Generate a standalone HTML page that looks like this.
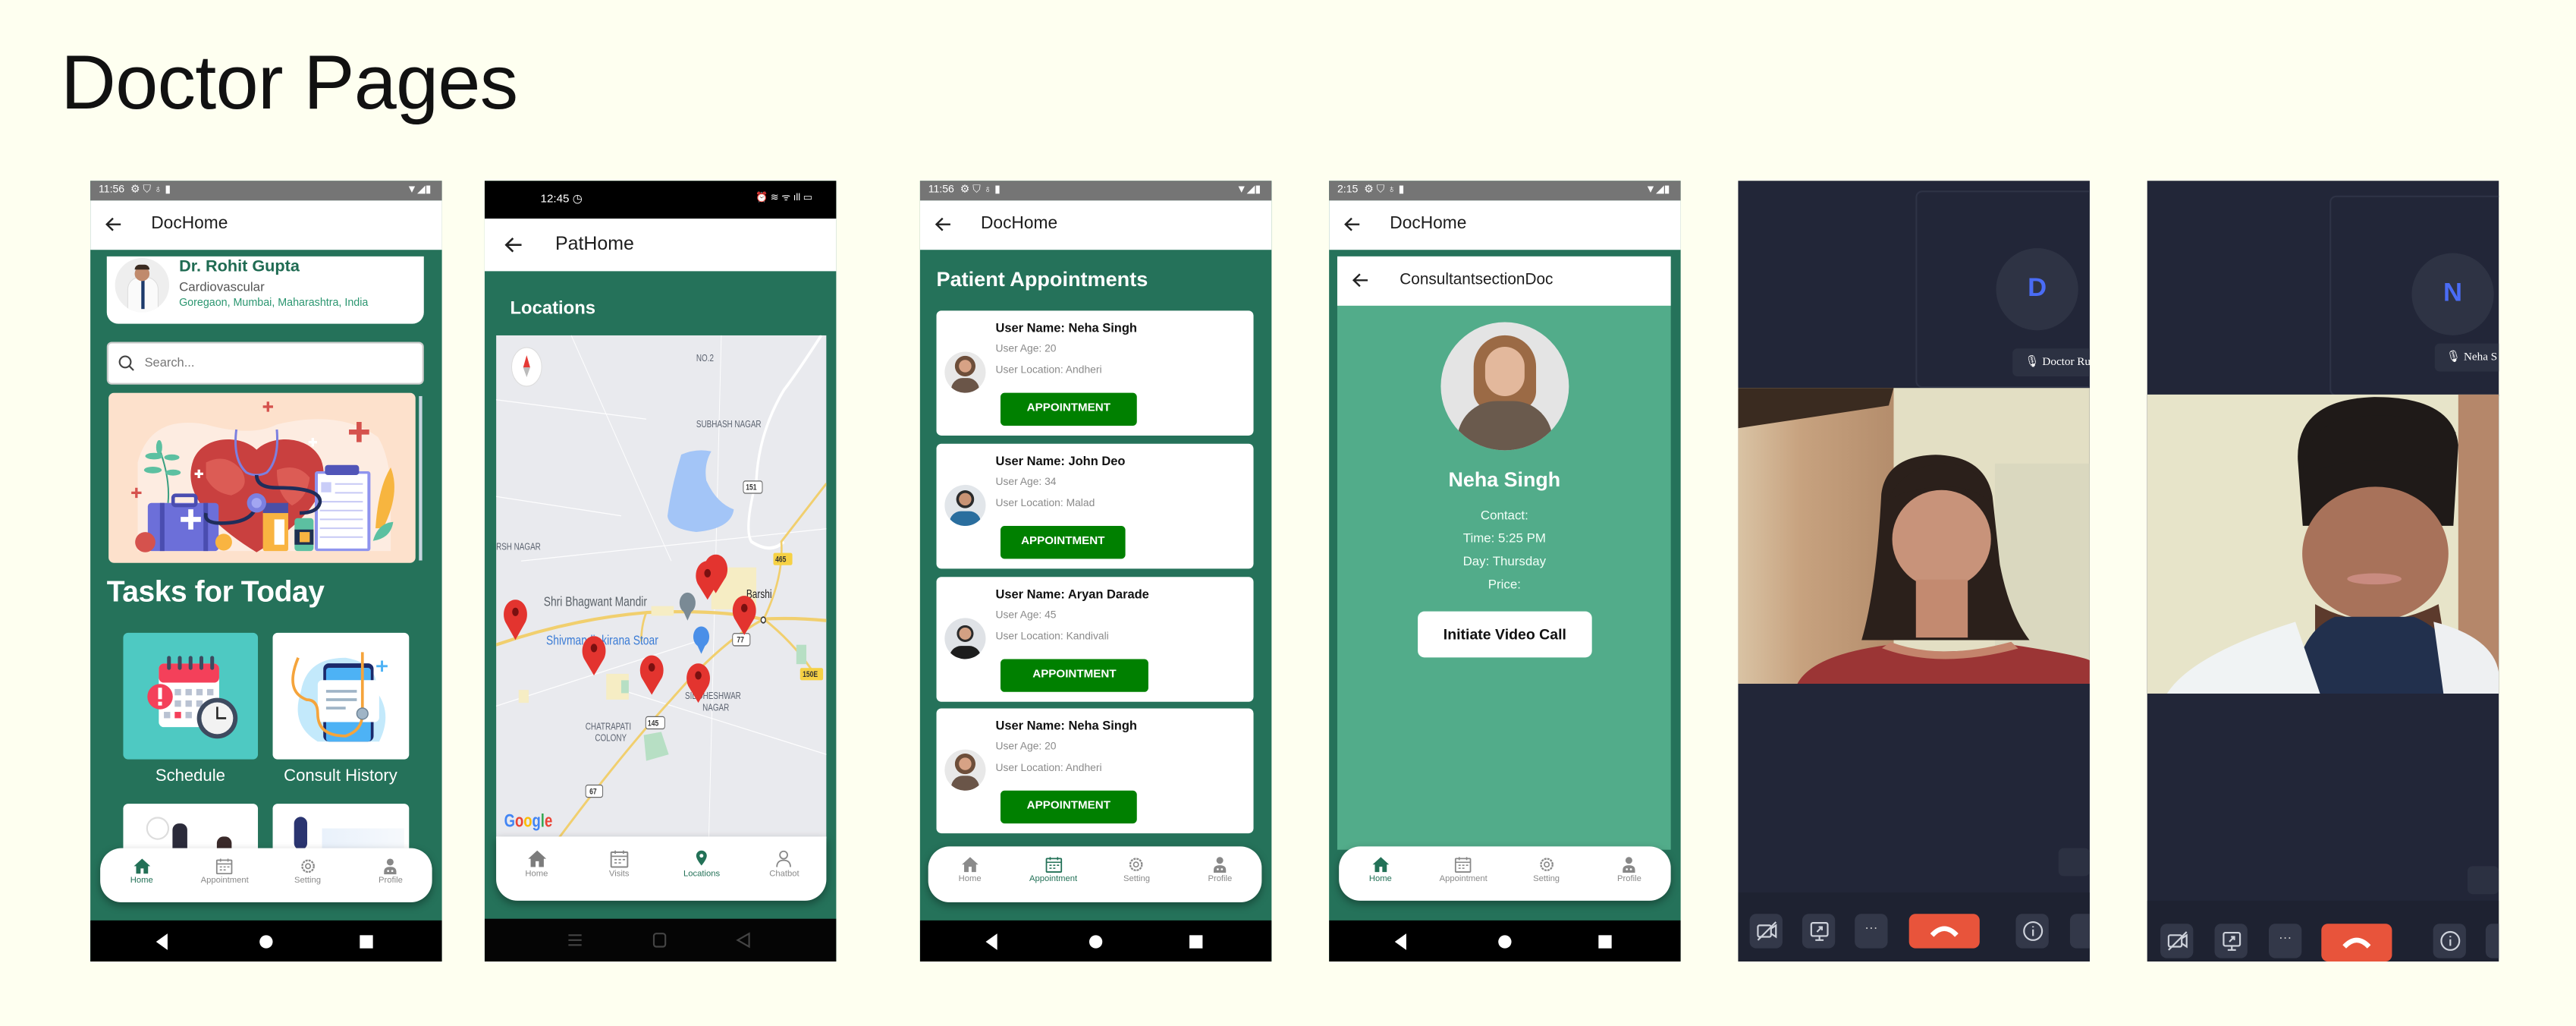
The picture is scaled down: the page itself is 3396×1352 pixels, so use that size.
<!DOCTYPE html>
<html><head><meta charset="utf-8">
<style>
*{margin:0;padding:0;box-sizing:border-box}
html,body{width:3396px;height:1352px;overflow:hidden;background:#fefff0}
#w{position:absolute;left:0;top:0;width:1568px;height:624.3px;transform:scale(2.16582);transform-origin:0 0;font-family:"Liberation Sans",Arial,sans-serif}
.a{position:absolute}
.ph{position:absolute;top:110px;width:213.5px;height:475px;background:#25725a;overflow:hidden}
.sb{position:absolute;left:0;top:0;width:100%;height:12px;background:#757575;color:#fff;font-size:6.5px;line-height:12px;padding-left:5px}
.ab{position:absolute;left:0;top:12px;width:100%;height:29.5px;background:#fff;font-size:10.5px;color:#1d1d1d;line-height:29.5px}
.ab .t{position:absolute;left:37px}
.ab svg{position:absolute;left:9px;top:10px}
.bb{position:absolute;left:0;bottom:0;width:100%;height:25px;background:#000}
.nav{position:absolute;background:#fff;border-radius:13px;box-shadow:0 2px 5px rgba(0,0,0,.35)}
.ni{position:absolute;top:0;width:25%;height:100%;text-align:center;font-size:5.2px;color:#8a8a8a}
.ni svg{display:block;margin:6px auto 1px}
.ni.on{color:#237157}
.card{position:absolute;left:10px;width:193px;height:75.5px;background:#fff;border-radius:3px}
.card .n{position:absolute;left:36px;top:6px;font-size:7.6px;font-weight:bold;color:#111}
.card .l{position:absolute;left:36px;font-size:6.4px;color:#8a8a8a}
.card .btn{position:absolute;left:39px;top:50px;height:20px;background:#008000;border-radius:2.5px;color:#fff;font-weight:bold;font-size:7px;text-align:center;line-height:20px}
.card .av{position:absolute;left:5px;top:25px;width:25px;height:25px;border-radius:50%;overflow:hidden;background:#d9d9d9}
.ctl{position:absolute;width:20px;height:21px;border-radius:4px;background:#333849}
</style></head><body><div id="w">

<div class="a" style="left:37px;top:23px;font-size:46.5px;color:#111;letter-spacing:-0.3px;-webkit-text-stroke:0">Doctor Pages</div>

<!-- ============ PHONE 1 ============ -->
<div class="ph" style="left:55px">
 <div class="sb">11:56 &nbsp;⚙ ⛉ ♁ ▮<span style="position:absolute;right:6px">▼◢▮</span></div>
 <div class="ab"><svg width="10" height="9" viewBox="0 0 10 9"><path d="M9.5 4.5H1.2M4.8 0.8L1 4.5l3.8 3.7" stroke="#222" stroke-width="1.1" fill="none"/></svg><span class="t">DocHome</span></div>
 <div class="a" style="left:10px;top:46px;width:193px;height:41px;background:#fff;border-radius:0 0 7px 7px"></div>
 <div class="a" style="left:15px;top:47px;width:33px;height:33px;border-radius:50%;background:radial-gradient(circle at 50% 30%,#c79a7d 0 15%,#eee 16%);overflow:hidden">
  <div class="a" style="left:8px;top:12px;width:18px;height:22px;background:#fafafa;border-radius:7px 7px 0 0;box-shadow:0 0 0 .5px #ddd"></div>
  <div class="a" style="left:16px;top:13px;width:2px;height:18px;background:#1d3a6b"></div>
  <div class="a" style="left:12px;top:5px;width:9px;height:9px;border-radius:50%;background:#c08a6c"></div>
  <div class="a" style="left:12px;top:4px;width:9px;height:3px;border-radius:4px 4px 0 0;background:#3a2a20"></div>
 </div>
 <div class="a" style="left:54px;top:47px;font-size:10px;font-weight:bold;color:#1f6b52">Dr. Rohit Gupta</div>
 <div class="a" style="left:54px;top:60px;font-size:7.8px;color:#555">Cardiovascular</div>
 <div class="a" style="left:54px;top:70.5px;font-size:6.6px;color:#2b9670">Goregaon, Mumbai, Maharashtra, India</div>
 <div class="a" style="left:10px;top:98px;width:193px;height:26px;background:#fff;border-radius:3px;border:.5px solid #ccc"></div>
 <svg class="a" style="left:17px;top:106px" width="10" height="10" viewBox="0 0 10 10"><circle cx="4.2" cy="4.2" r="3.4" stroke="#444" stroke-width="1" fill="none"/><path d="M6.7 6.7L9.3 9.3" stroke="#444" stroke-width="1"/></svg>
 <div class="a" style="left:33px;top:106px;font-size:7.6px;color:#777">Search...</div>
 <svg class="a" style="left:10.5px;top:129px" width="187" height="103.5" viewBox="35 25 1213 672">
  <rect x="35" y="25" width="1213" height="672" rx="22" fill="#fde1cc"/>
  <path d="M150 300 Q200 110 420 150 Q600 200 700 150 Q950 90 1100 200 Q1160 300 1150 500 L1150 650 L150 650Z" fill="#fdece1"/>
  <path d="M620 655 C400 520 330 400 370 290 C410 190 560 190 620 250 C680 190 830 190 875 290 C915 400 840 520 620 655Z" fill="#c9403f"/>
  <path d="M420 300 Q500 260 560 330 Q600 400 520 430 Q450 420 420 360Z" fill="#dc5c55"/>
  <path d="M700 330 Q780 300 830 360 Q820 440 760 470 Q700 430 700 330Z" fill="#dc5c55"/>
  <rect x="190" y="460" width="280" height="190" rx="14" fill="#6c6fd9"/><rect x="290" y="430" width="90" height="40" rx="10" fill="none" stroke="#4a4db0" stroke-width="14"/>
  <rect x="238" y="460" width="18" height="190" fill="#4a4db0"/><rect x="410" y="460" width="18" height="190" fill="#4a4db0"/>
  <path d="M320 515h30v-30h20v30h30v20h-30v30h-20v-30h-30z" fill="#fff"/>
  <rect x="645" y="465" width="100" height="185" rx="8" fill="#f9b441"/><rect x="645" y="460" width="100" height="40" fill="#4b4fa6"/><rect x="690" y="525" width="40" height="100" fill="#fff"/>
  <rect x="770" y="520" width="75" height="130" rx="12" fill="#5cc0a1"/><rect x="770" y="565" width="75" height="60" fill="#1f3050"/><rect x="790" y="575" width="40" height="40" fill="#f9b441"/>
  <rect x="850" y="335" width="220" height="315" rx="10" fill="#8f94ee"/><rect x="862" y="345" width="196" height="295" fill="#fff"/>
  <rect x="890" y="310" width="135" height="40" rx="12" fill="#5155b8"/>
  <g stroke="#c7c9f5" stroke-width="6"><path d="M930 385h110M930 420h110M870 455h170M870 490h170M870 525h170M870 560h170M870 595h170"/></g>
  <rect x="875" y="378" width="40" height="40" fill="#c9cdf8"/>
  <path d="M540 170 Q525 290 580 340 Q620 360 660 340 Q710 290 700 170" stroke="#7c80e0" stroke-width="9" fill="none"/>
  <path d="M620 350 Q620 400 700 400 Q880 400 870 460 Q860 500 790 500" stroke="#1f2d5a" stroke-width="14" fill="none"/>
  <path d="M620 450 Q620 540 480 540 Q410 540 420 500" stroke="#1f2d5a" stroke-width="14" fill="none"/>
  <circle cx="620" cy="460" r="38" fill="#7c80e0"/><circle cx="620" cy="460" r="20" fill="#a2a6f2"/>
  <path d="M230 230 Q280 360 270 460" stroke="#3a9f80" stroke-width="6" fill="none"/>
  <g fill="#5cc0a1"><ellipse cx="215" cy="275" rx="35" ry="13"/><ellipse cx="285" cy="280" rx="30" ry="12"/><ellipse cx="210" cy="330" rx="35" ry="13"/><ellipse cx="290" cy="340" rx="30" ry="12"/><ellipse cx="235" cy="240" rx="12" ry="28"/></g>
  <path d="M1090 560 Q1100 400 1150 320 Q1190 420 1120 560Z" fill="#f7b53f"/><path d="M1080 610 Q1100 540 1160 535 Q1150 600 1080 610Z" fill="#5cc0a1"/>
  <circle cx="180" cy="615" r="40" fill="#d5524d"/><circle cx="490" cy="615" r="33" fill="#f9b441"/>
  <path d="M985 170h30v-30h20v30h30v20h-30v30h-20v-30h-30z" fill="#d5524d"/><path d="M645 75h15v-15h10v15h15v10h-15v15h-10v-15h-15z" fill="#d5524d"/>
  <path d="M125 415h15v-15h10v15h15v10h-15v15h-10v-15h-15z" fill="#d5524d"/>
  <path d="M375 340h12v-12h10v12h12v10h-12v12h-10v-12h-12z" fill="#fff"/><path d="M825 215h12v-12h10v12h12v10h-12v12h-10v-12h-12z" fill="#fff"/>
 </svg>
 <div class="a" style="left:200px;top:131px;width:2px;height:100px;background:#c8d6e0"></div>
 <div class="a" style="left:10px;top:240px;font-size:18px;font-weight:bold;color:#fff;letter-spacing:-0.2px">Tasks for Today</div>
 <div class="a" style="left:19.5px;top:274.7px;width:82.7px;height:77.8px;background:#4ec9c2;border-radius:3px"></div>
 <svg class="a" style="left:26px;top:286px" width="70" height="58" viewBox="0 0 180 150">
  <rect x="40" y="20" width="95" height="100" rx="8" fill="#fff"/><rect x="40" y="20" width="95" height="30" rx="8" fill="#f4405a"/>
  <g fill="#3e4a5f"><rect x="53" y="8" width="6" height="22" rx="3"/><rect x="70" y="8" width="6" height="22" rx="3"/><rect x="87" y="8" width="6" height="22" rx="3"/><rect x="104" y="8" width="6" height="22" rx="3"/><rect x="121" y="8" width="6" height="22" rx="3"/></g>
  <g fill="#b9c2d2"><rect x="65" y="60" width="10" height="10"/><rect x="82" y="60" width="10" height="10"/><rect x="99" y="60" width="10" height="10"/><rect x="116" y="60" width="10" height="10"/><rect x="65" y="78" width="10" height="10"/><rect x="82" y="78" width="10" height="10"/><rect x="99" y="78" width="10" height="10"/><rect x="48" y="96" width="10" height="10"/><rect x="82" y="96" width="10" height="10"/></g>
  <rect x="65" y="96" width="10" height="10" fill="#f4405a"/>
  <circle cx="42" cy="72" r="20" fill="#f4405a"/><rect x="39" y="58" width="6" height="18" fill="#fff"/><rect x="39" y="80" width="6" height="6" fill="#fff"/>
  <circle cx="132" cy="106" r="32" fill="#3e4a5f"/><circle cx="132" cy="106" r="25" fill="#f2f2f2"/><path d="M132 88v18h14" stroke="#222" stroke-width="3" fill="none"/>
 </svg>
 <div class="a" style="left:110.8px;top:274.7px;width:83px;height:77.8px;background:#fff;border-radius:3px"></div>
 <svg class="a" style="left:118px;top:283px" width="68" height="62" viewBox="0 0 200 180">
  <path d="M30 80 Q40 20 110 20 Q170 30 165 80 Q195 120 170 170 L60 170 Q10 140 30 80Z" fill="#c3e9fb"/>
  <rect x="70" y="30" width="90" height="140" rx="10" fill="#1b2a6b"/><rect x="75" y="38" width="80" height="132" rx="5" fill="#4db2f5"/>
  <rect x="60" y="60" width="110" height="75" rx="8" fill="#fff"/><g stroke="#9fb4c6" stroke-width="5"><path d="M75 80h55M75 95h55M75 110h35"/></g>
  <path d="M25 20 Q0 80 40 95 Q60 95 60 120 Q60 160 110 160 Q140 150 140 120 L140 10" stroke="#f5a43b" stroke-width="5" fill="none"/>
  <circle cx="140" cy="120" r="10" fill="#9fb4c6" stroke="#6e8497" stroke-width="2"/>
  <path d="M175 25v20M165 35h20" stroke="#4db2f5" stroke-width="4"/>
 </svg>
 <div class="a" style="left:19.5px;top:357px;width:82.7px;text-align:center;font-size:10.2px;color:#fff">Schedule</div>
 <div class="a" style="left:110.8px;top:357px;width:83px;text-align:center;font-size:10.2px;color:#fff">Consult History</div>
 <div class="a" style="left:19.5px;top:379px;width:82.7px;height:40px;background:#fff;border-radius:3px;overflow:hidden"><div class="a" style="left:14px;top:8px;width:14px;height:14px;border-radius:50%;border:1px solid #ddd"></div><div class="a" style="left:30px;top:12px;width:9px;height:20px;border-radius:4px;background:#2b2b3a"></div><div class="a" style="left:57px;top:20px;width:9px;height:12px;border-radius:4px;background:#3a2a2a"></div></div>
 <div class="a" style="left:110.8px;top:379px;width:83px;height:40px;background:#fff;border-radius:3px;overflow:hidden"><div class="a" style="left:13px;top:8px;width:8px;height:20px;border-radius:4px;background:#2a3470"></div><div class="a" style="left:30px;top:15px;width:50px;height:20px;background:linear-gradient(90deg,#e9f1fb,#f6f9fc)"></div></div>
 <div class="nav" style="left:6px;top:406px;width:202px;height:33px">
  <div class="ni on" style="left:0"><svg width="11" height="10" viewBox="0 0 24 22"><path d="M12 1L1 11h3v10h6v-7h4v7h6V11h3z" fill="#237157"/></svg>Home</div>
  <div class="ni" style="left:25%"><svg width="11" height="10" viewBox="0 0 24 22"><rect x="2" y="3" width="20" height="18" rx="1" fill="none" stroke="#888" stroke-width="1.8"/><path d="M2 8h20M7 1v4M17 1v4M6 12h3M11 12h3M16 12h3M6 16h3M11 16h3" stroke="#888" stroke-width="1.6"/></svg>Appointment</div>
  <div class="ni" style="left:50%"><svg width="11" height="10" viewBox="0 0 24 24"><circle cx="12" cy="12" r="8.5" fill="none" stroke="#888" stroke-width="2.5" stroke-dasharray="3.3 1.2"/><circle cx="12" cy="12" r="3.5" fill="none" stroke="#888" stroke-width="1.8"/></svg>Setting</div>
  <div class="ni" style="left:75%"><svg width="11" height="10" viewBox="0 0 24 24"><circle cx="12" cy="6" r="5" fill="#888"/><path d="M3 24v-4q0-7 9-7t9 7v4z" fill="#888"/><circle cx="9" cy="19" r="1.5" fill="#fff"/><circle cx="15" cy="19" r="1.5" fill="#fff"/></svg>Profile</div>
 </div>
 <div class="bb"><svg class="a" style="left:40px;top:8px" width="134" height="10" viewBox="0 0 134 10"><path d="M0 5L7 0V10Z" fill="#fff"/><circle cx="67" cy="5" r="4" fill="#fff"/><rect x="124" y="1" width="8" height="8" fill="#fff"/></svg></div>
</div>

<!-- ============ PHONE 2 ============ -->
<div class="ph" style="left:295px">
 <div class="a" style="left:0;top:0;width:100%;height:23px;background:#000;color:#fff;font-size:7px;line-height:23px"><span style="position:absolute;left:34px">12:45 ◷</span><span style="position:absolute;right:14px;font-size:6px">⏰ ≋ ᯤ ıll ▭</span></div>
 <div class="ab" style="top:23px;height:32px;line-height:32px;font-size:11.5px"><svg style="left:12px;top:11px" width="11" height="10" viewBox="0 0 10 9"><path d="M9.5 4.5H1.2M4.8 0.8L1 4.5l3.8 3.7" stroke="#222" stroke-width="1.1" fill="none"/></svg><span class="t" style="left:43px">PatHome</span></div>
 <div class="a" style="left:15.5px;top:72px;font-size:11px;font-weight:bold;color:#fff">Locations</div>
 <svg class="a" style="left:6.5px;top:94px;" width="201" height="306" viewBox="0 0 1320 1560" preserveAspectRatio="none">
  <rect width="1320" height="1560" fill="#e9eaee"/>
  <g stroke="#fff" stroke-width="3" fill="none" opacity=".9"><path d="M0 200 L600 260 M300 0 L700 700 M0 1150 L800 950 M100 700 L1320 600 M900 0 L850 1560 M500 1100 L1320 1300 M0 500 L500 560"/></g>
  <path d="M1300 0 Q1200 120 1150 170 Q1050 300 1040 450 Q990 600 1020 640 Q1100 680 1150 640" stroke="#fff" stroke-width="10" fill="none"/>
  <path d="M740 370 Q800 350 860 360 Q830 400 840 450 Q880 520 950 540 Q940 600 800 610 Q690 600 685 560 Q700 470 740 370Z" fill="#a3c5f7"/>
  <path d="M0 960 Q300 880 600 860 Q900 850 1060 880 Q1200 875 1320 885" stroke="#f1cf6e" stroke-width="10" fill="none"/>
  <path d="M250 1560 Q500 1300 700 1130 Q900 950 1070 880 Q1150 750 1140 640 L1320 460" stroke="#f1cf6e" stroke-width="8" fill="none"/>
  <path d="M1070 880 Q1200 960 1280 1060" stroke="#f1cf6e" stroke-width="8" fill="none"/>
  <path d="M600 860 Q580 900 580 950" stroke="#f1cf6e" stroke-width="8" fill="none"/>
  <g fill="#f6edc4"><rect x="860" y="720" width="180" height="130"/><rect x="440" y="1050" width="90" height="80"/><rect x="90" y="1100" width="40" height="40"/><rect x="620" y="840" width="90" height="30"/></g>
  <g fill="#b7dfc4"><path d="M590 1240 L660 1230 L690 1300 L600 1320Z"/><rect x="500" y="1070" width="30" height="40"/><rect x="1200" y="960" width="40" height="60"/></g>
  <g fill="#5c6370" font-size="30" font-family="Liberation Sans"><text x="800" y="80">NO.2</text><text x="800" y="285">SUBHASH NAGAR</text><text x="0" y="665">RSH NAGAR</text><text x="1000" y="815" fill="#222" font-size="36">Barshi</text><text x="755" y="1128">SIDDHESHWAR</text><text x="825" y="1165">NAGAR</text><text x="357" y="1223">CHATRAPATI</text><text x="395" y="1258">COLONY</text></g>
  <text x="190" y="840" font-size="42" fill="#5a6168" font-family="Liberation Sans">Shri Bhagwant Mandir</text>
  <text x="200" y="960" font-size="42" fill="#3a7bd5" font-family="Liberation Sans">Shivmandir kirana Stoar</text>
  <circle cx="765" cy="830" r="32" fill="#7a8a95"/><path d="M745 850 L765 885 L785 850Z" fill="#7a8a95"/>
  <circle cx="820" cy="935" r="32" fill="#4a8fe8"/><path d="M800 955 L820 988 L840 955Z" fill="#4a8fe8"/>
  <g font-size="26" font-family="Liberation Sans" font-weight="bold"><rect x="1108" y="675" width="76" height="38" rx="6" fill="#f6d144"/><text x="1116" y="703" fill="#333">465</text><rect x="1215" y="1032" width="92" height="38" rx="6" fill="#f6d144"/><text x="1225" y="1060" fill="#333">150E</text>
  <rect x="988" y="452" width="76" height="38" rx="8" fill="#fff" stroke="#666" stroke-width="3"/><text x="998" y="480" fill="#333">151</text>
  <rect x="945" y="925" width="70" height="38" rx="8" fill="#fff" stroke="#666" stroke-width="3"/><text x="962" y="953" fill="#333">77</text>
  <rect x="598" y="1183" width="76" height="38" rx="8" fill="#fff" stroke="#666" stroke-width="3"/><text x="606" y="1211" fill="#333">145</text>
  <rect x="358" y="1395" width="68" height="38" rx="8" fill="#fff" stroke="#666" stroke-width="3"/><text x="373" y="1423" fill="#333">67</text></g>
  <g fill="#e3342f">
   <path d="M878 680 a46 46 0 0 1 40 70 L878 800 L838 750 a46 46 0 0 1 40 -70Z"/>
   <path d="M845 700 a46 46 0 0 1 40 70 L845 820 L805 770 a46 46 0 0 1 40 -70Z"/>
   <path d="M77 820 a46 46 0 0 1 40 70 L77 945 L37 890 a46 46 0 0 1 40 -70Z"/>
   <path d="M992 808 a46 46 0 0 1 40 70 L992 930 L952 878 a46 46 0 0 1 40 -70Z"/>
   <path d="M391 933 a46 46 0 0 1 40 70 L391 1055 L351 1003 a46 46 0 0 1 40 -70Z"/>
   <path d="M622 993 a46 46 0 0 1 40 70 L622 1115 L582 1063 a46 46 0 0 1 40 -70Z"/>
   <path d="M808 1018 a46 46 0 0 1 40 70 L808 1140 L768 1088 a46 46 0 0 1 40 -70Z"/>
  </g>
  <g fill="#7a1010"><circle cx="845" cy="738" r="13"/><circle cx="77" cy="858" r="13"/><circle cx="992" cy="846" r="13"/><circle cx="391" cy="970" r="13"/><circle cx="622" cy="1030" r="13"/><circle cx="808" cy="1055" r="13"/></g>
  <circle cx="1068" cy="883" r="9" fill="#fff" stroke="#333" stroke-width="4"/>
  <circle cx="122" cy="98" r="60" fill="#fff" stroke="#ddd" stroke-width="3"/><path d="M122 62 L108 100 L136 100Z" fill="#e53935"/><path d="M108 100 L122 130 L136 100Z" fill="#bbb"/>
  <text x="32" y="1525" font-size="56" font-family="Liberation Sans" font-weight="bold"><tspan fill="#4285f4">G</tspan><tspan fill="#ea4335">o</tspan><tspan fill="#fbbc05">o</tspan><tspan fill="#4285f4">g</tspan><tspan fill="#34a853">l</tspan><tspan fill="#ea4335">e</tspan></text>
 </svg>
 <div class="nav" style="left:6.5px;top:399px;width:201px;height:39px;border-radius:0 0 13px 13px">
  <div class="ni" style="left:0"><svg style="margin-top:8px" width="12" height="11" viewBox="0 0 24 22"><path d="M12 1L1 11h3v10h6v-7h4v7h6V11h3z" fill="#7c7c7c"/></svg>Home</div>
  <div class="ni" style="left:25%"><svg style="margin-top:8px" width="12" height="11" viewBox="0 0 24 22"><rect x="2" y="3" width="20" height="18" rx="1" fill="none" stroke="#888" stroke-width="1.8"/><path d="M2 8h20M7 1v4M17 1v4M6 12h3M11 12h3M16 12h3M6 16h3M11 16h3" stroke="#888" stroke-width="1.6"/></svg>Visits</div>
  <div class="ni on" style="left:50%"><svg style="margin-top:8px" width="12" height="11" viewBox="0 0 24 24"><path d="M12 1a7 7 0 0 1 7 7c0 5-7 13-7 13S5 13 5 8a7 7 0 0 1 7-7z" fill="#237157"/><circle cx="12" cy="8" r="2.5" fill="#fff"/></svg>Locations</div>
  <div class="ni" style="left:75%"><svg style="margin-top:8px" width="12" height="11" viewBox="0 0 24 24"><circle cx="12" cy="7" r="5" fill="none" stroke="#888" stroke-width="1.8"/><path d="M3 23q0-9 9-9t9 9" fill="none" stroke="#888" stroke-width="1.8"/></svg>Chatbot</div>
 </div>
 <div class="bb" style="background:#050505;height:26px"><svg class="a" style="left:50px;top:8px" width="114" height="10" viewBox="0 0 114 10"><path d="M1 2h8M1 5h8M1 8h8" stroke="#444" stroke-width="1"/><rect x="53" y="1" width="7" height="8" rx="1.5" fill="none" stroke="#444"/><path d="M111 1L104 5L111 9Z" fill="none" stroke="#444"/></svg></div>
</div>

<!-- ============ PHONE 3 ============ -->
<div class="ph" style="left:560px">
 <div class="sb">11:56 &nbsp;⚙ ⛉ ♁ ▮<span style="position:absolute;right:6px">▼◢▮</span></div>
 <div class="ab"><svg width="10" height="9" viewBox="0 0 10 9"><path d="M9.5 4.5H1.2M4.8 0.8L1 4.5l3.8 3.7" stroke="#222" stroke-width="1.1" fill="none"/></svg><span class="t">DocHome</span></div>
 <div class="a" style="left:10px;top:53px;font-size:12.5px;font-weight:bold;color:#fff">Patient Appointments</div>
 <div class="card" style="top:79px"><div class="av" style="background:radial-gradient(circle at 50% 35%,#d7a285 0 18%,#6d4e3a 19% 30%,#e8e8e8 31%)"><div class="a" style="left:4px;top:16px;width:17px;height:12px;border-radius:7px 7px 0 0;background:#6a5548"></div></div><div class="n">User Name: Neha Singh</div><div class="l" style="top:20px">User Age: 20</div><div class="l" style="top:33px">User Location: Andheri</div><div class="btn" style="width:83px">APPOINTMENT</div></div>
 <div class="card" style="top:160px"><div class="av" style="background:radial-gradient(circle at 50% 35%,#c99374 0 18%,#2b2b2b 19% 26%,#e2e6ea 27%)"><div class="a" style="left:3px;top:16px;width:19px;height:12px;border-radius:7px 7px 0 0;background:#2a6e9e"></div></div><div class="n">User Name: John Deo</div><div class="l" style="top:20px">User Age: 34</div><div class="l" style="top:33px">User Location: Malad</div><div class="btn" style="width:76px">APPOINTMENT</div></div>
 <div class="card" style="top:241px"><div class="av" style="background:radial-gradient(circle at 50% 38%,#d3a083 0 18%,#2b2b2b 19% 25%,#dfe2e6 26%)"><div class="a" style="left:3px;top:17px;width:19px;height:12px;border-radius:7px 7px 0 0;background:#1d1d1d"></div></div><div class="n">User Name: Aryan Darade</div><div class="l" style="top:20px">User Age: 45</div><div class="l" style="top:33px">User Location: Kandivali</div><div class="btn" style="width:90px">APPOINTMENT</div></div>
 <div class="card" style="top:321px"><div class="av" style="background:radial-gradient(circle at 50% 35%,#d7a285 0 18%,#6d4e3a 19% 30%,#e8e8e8 31%)"><div class="a" style="left:4px;top:16px;width:17px;height:12px;border-radius:7px 7px 0 0;background:#6a5548"></div></div><div class="n">User Name: Neha Singh</div><div class="l" style="top:20px">User Age: 20</div><div class="l" style="top:33px">User Location: Andheri</div><div class="btn" style="width:83px">APPOINTMENT</div></div>
 <div class="nav" style="left:5px;top:405px;width:203px;height:34px">
  <div class="ni" style="left:0"><svg width="11" height="10" viewBox="0 0 24 22"><path d="M12 1L1 11h3v10h6v-7h4v7h6V11h3z" fill="#8a8a8a"/></svg>Home</div>
  <div class="ni on" style="left:25%"><svg width="11" height="10" viewBox="0 0 24 22"><rect x="2" y="3" width="20" height="18" rx="1" fill="none" stroke="#237157" stroke-width="1.8"/><path d="M2 8h20M7 1v4M17 1v4M6 12h3M11 12h3M16 12h3M6 16h3M11 16h3" stroke="#237157" stroke-width="1.6"/></svg>Appointment</div>
  <div class="ni" style="left:50%"><svg width="11" height="10" viewBox="0 0 24 24"><circle cx="12" cy="12" r="8.5" fill="none" stroke="#888" stroke-width="2.5" stroke-dasharray="3.3 1.2"/><circle cx="12" cy="12" r="3.5" fill="none" stroke="#888" stroke-width="1.8"/></svg>Setting</div>
  <div class="ni" style="left:75%"><svg width="11" height="10" viewBox="0 0 24 24"><circle cx="12" cy="6" r="5" fill="#888"/><path d="M3 24v-4q0-7 9-7t9 7v4z" fill="#888"/><circle cx="9" cy="19" r="1.5" fill="#fff"/><circle cx="15" cy="19" r="1.5" fill="#fff"/></svg>Profile</div>
 </div>
 <div class="bb"><svg class="a" style="left:40px;top:8px" width="134" height="10" viewBox="0 0 134 10"><path d="M0 5L7 0V10Z" fill="#fff"/><circle cx="67" cy="5" r="4" fill="#fff"/><rect x="124" y="1" width="8" height="8" fill="#fff"/></svg></div>
</div>

<!-- ============ PHONE 4 ============ -->
<div class="ph" style="left:809px">
 <div class="sb">2:15 &nbsp;⚙ ⛉ ♁ ▮<span style="position:absolute;right:6px">▼◢▮</span></div>
 <div class="ab"><svg width="10" height="9" viewBox="0 0 10 9"><path d="M9.5 4.5H1.2M4.8 0.8L1 4.5l3.8 3.7" stroke="#222" stroke-width="1.1" fill="none"/></svg><span class="t">DocHome</span></div>
 <div class="a" style="left:5px;top:46px;width:203px;height:361px;background:#52ac8a"></div>
 <div class="a" style="left:5px;top:46px;width:203px;height:29.5px;background:#fff;font-size:9.6px;line-height:29.5px;color:#1d1d1d"><svg class="a" style="left:9px;top:10px" width="10" height="9" viewBox="0 0 10 9"><path d="M9.5 4.5H1.2M4.8 0.8L1 4.5l3.8 3.7" stroke="#222" stroke-width="1.1" fill="none"/></svg><span class="a" style="left:38px">ConsultantsectionDoc</span></div>
 <div class="a" style="left:68px;top:85.5px;width:78px;height:78px;border-radius:50%;background:#e4e4e4;overflow:hidden">
  <div class="a" style="left:20px;top:8px;width:38px;height:46px;border-radius:19px 19px 12px 12px;background:#9b6a45"></div>
  <div class="a" style="left:27px;top:15px;width:24px;height:30px;border-radius:12px;background:#e3b89c"></div>
  <div class="a" style="left:10px;top:48px;width:58px;height:40px;border-radius:24px 24px 0 0;background:#6a5a4d"></div>
 </div>
 <div class="a" style="left:0;top:175px;width:213.5px;text-align:center;font-size:12.4px;font-weight:bold;color:#fff">Neha Singh</div>
 <div class="a" style="left:0;top:197px;width:213.5px;text-align:center;font-size:7.8px;color:#f2fff7;line-height:14px">Contact:<br>Time: 5:25 PM<br>Day: Thursday<br>Price:</div>
 <div class="a" style="left:54px;top:262px;width:106px;height:28px;background:#fff;border-radius:4px;text-align:center;line-height:28px;font-size:9px;font-weight:bold;color:#111">Initiate Video Call</div>
 <div class="nav" style="left:6px;top:405px;width:202px;height:33px">
  <div class="ni on" style="left:0"><svg width="11" height="10" viewBox="0 0 24 22"><path d="M12 1L1 11h3v10h6v-7h4v7h6V11h3z" fill="#237157"/></svg>Home</div>
  <div class="ni" style="left:25%"><svg width="11" height="10" viewBox="0 0 24 22"><rect x="2" y="3" width="20" height="18" rx="1" fill="none" stroke="#888" stroke-width="1.8"/><path d="M2 8h20M7 1v4M17 1v4M6 12h3M11 12h3M16 12h3M6 16h3M11 16h3" stroke="#888" stroke-width="1.6"/></svg>Appointment</div>
  <div class="ni" style="left:50%"><svg width="11" height="10" viewBox="0 0 24 24"><circle cx="12" cy="12" r="8.5" fill="none" stroke="#888" stroke-width="2.5" stroke-dasharray="3.3 1.2"/><circle cx="12" cy="12" r="3.5" fill="none" stroke="#888" stroke-width="1.8"/></svg>Setting</div>
  <div class="ni" style="left:75%"><svg width="11" height="10" viewBox="0 0 24 24"><circle cx="12" cy="6" r="5" fill="#888"/><path d="M3 24v-4q0-7 9-7t9 7v4z" fill="#888"/><circle cx="9" cy="19" r="1.5" fill="#fff"/><circle cx="15" cy="19" r="1.5" fill="#fff"/></svg>Profile</div>
 </div>
 <div class="bb"><svg class="a" style="left:40px;top:8px" width="134" height="10" viewBox="0 0 134 10"><path d="M0 5L7 0V10Z" fill="#fff"/><circle cx="67" cy="5" r="4" fill="#fff"/><rect x="124" y="1" width="8" height="8" fill="#fff"/></svg></div>
</div>

<!-- ============ PHONE 5 (video) ============ -->
<div class="ph" style="left:1058px;width:214px;background:#222638">
 <div class="a" style="left:108px;top:6px;width:110px;height:120px;border:.6px solid #2e3346;border-radius:4px"></div>
 <div class="a" style="left:157px;top:41px;width:50px;height:50px;border-radius:50%;background:#2e3344;color:#4a6cf5;font-weight:bold;font-size:16px;text-align:center;line-height:50px">D</div>
 <div class="a" style="left:166.5px;top:102px;width:50px;height:17px;border-radius:3px;background:#2c3142;color:#fff;font-family:'Liberation Serif',serif;font-size:7px;line-height:17px;padding-left:8px;white-space:nowrap">🎙 Doctor Ru</div>
 <svg class="a" style="left:0;top:125.5px" width="214" height="180" viewBox="0 0 712 1173" preserveAspectRatio="none">
  <defs><linearGradient id="wl" x1="0" x2="1"><stop offset="0" stop-color="#d9c3a4"/><stop offset=".4" stop-color="#c7a27f"/><stop offset="1" stop-color="#b48d6c"/></linearGradient></defs>
  <rect width="712" height="1173" fill="#e3dfc4"/>
  <rect width="315" height="1173" fill="url(#wl)"/><path d="M0 0H315L305 70L0 160Z" fill="#3a2b20"/>
  <rect x="520" y="300" width="192" height="873" fill="#d4d3bd" opacity=".6"/>
  <path d="M290 420 Q300 270 400 265 Q500 270 515 430 L530 700 Q550 900 590 1000 L250 1000 Q280 800 290 420Z" fill="#2b201b"/>
  <ellipse cx="412" cy="600" rx="100" ry="195" fill="#c8937a"/>
  <path d="M300 450 Q340 300 420 300 Q495 305 510 450 Q450 350 330 420Z" fill="#2b201b"/>
  <rect x="360" y="760" width="105" height="230" fill="#c38a70"/>
  <path d="M120 1173 Q150 1060 300 1020 Q400 1070 560 1020 Q690 1060 712 1080 V1173Z" fill="#9b3535"/>
  <path d="M300 1020 Q410 1100 560 1020" stroke="#c4846c" stroke-width="30" fill="none"/>
 </svg>
 <div class="a" style="left:0;top:433px;width:214px;height:42px;background:#1e2231"></div>
 <div class="a" style="left:195px;top:406px;width:19px;height:17px;border-radius:3px;background:#2c3142"></div>
 <div class="ctl" style="left:7px;top:446px"></div><div class="ctl" style="left:39px;top:446px"></div><div class="ctl" style="left:71px;top:446px;color:#ccc;font-size:8px;text-align:center;line-height:17px">···</div>
 <div class="a" style="left:104px;top:446px;width:43px;height:21px;border-radius:4px;background:#e8543b"></div>
 <svg class="a" style="left:117px;top:452px" width="17" height="9" viewBox="0 0 17 9"><path d="M1 7Q8.5-1 16 7" stroke="#fff" stroke-width="3" fill="none"/></svg>
 <div class="ctl" style="left:169px;top:446px"></div><div class="ctl" style="left:202px;top:446px"></div>
 <svg class="a" style="left:11px;top:450px" width="13" height="13" viewBox="0 0 13 13" stroke="#cfd3dc" fill="none" stroke-width="1"><rect x="1" y="3" width="8" height="7" rx="1"/><path d="M9 5l3-2v7l-3-2M1 12L12 1"/></svg>
 <svg class="a" style="left:43px;top:450px" width="13" height="13" viewBox="0 0 13 13" stroke="#cfd3dc" fill="none" stroke-width="1"><rect x="1.5" y="1.5" width="10" height="8" rx="1"/><path d="M6.5 9.5v2M4 12h5M5 7l3-3M6 4h2v2"/></svg>
 <svg class="a" style="left:173px;top:450px" width="13" height="13" viewBox="0 0 13 13" stroke="#cfd3dc" fill="none" stroke-width="1"><circle cx="6.5" cy="6.5" r="5.5"/><path d="M6.5 5.5v4M6.5 3.5v.8"/></svg>
</div>

<!-- ============ PHONE 6 (video) ============ -->
<div class="ph" style="left:1307px;width:214px;background:#222638">
 <div class="a" style="left:111px;top:9px;width:110px;height:122px;border:.6px solid #2e3346;border-radius:4px"></div>
 <div class="a" style="left:161px;top:44px;width:50px;height:50px;border-radius:50%;background:#2e3344;color:#4a6cf5;font-weight:bold;font-size:16px;text-align:center;line-height:50px">N</div>
 <div class="a" style="left:175px;top:99px;width:45px;height:17px;border-radius:3px;background:#2c3142;color:#fff;font-family:'Liberation Serif',serif;font-size:7px;line-height:17px;padding-left:7px;white-space:nowrap">🎙 Neha S</div>
 <svg class="a" style="left:0;top:130px" width="214" height="182" viewBox="0 0 712 1184" preserveAspectRatio="none">
  <rect width="712" height="1184" fill="#e7e4c9"/>
  <rect x="630" width="82" height="1184" fill="#b5876a"/>
  <path d="M305 260 Q300 20 460 10 Q620 10 630 200 L620 520 L315 520Z" fill="#1f1a18"/>
  <ellipse cx="462" cy="630" rx="148" ry="265" fill="#a8725a"/>
  <path d="M315 320 Q460 200 620 320 L625 150 Q520 60 420 90 Q320 110 315 320Z" fill="#1f1a18"/>
  <path d="M340 830 Q460 960 590 830 L600 950 L340 950Z" fill="#5c3a2c"/>
  <path d="M300 1184 Q300 950 380 880 L540 880 Q630 950 640 1184Z" fill="#22304d"/>
  <path d="M40 1184 Q90 1030 300 900 L350 1184Z" fill="#f0f3f4"/><path d="M580 900 Q700 960 712 1100 V1184H600Z" fill="#eef0f2"/>
  <ellipse cx="460" cy="730" rx="55" ry="22" fill="#c98b80"/>
 </svg>
 <div class="a" style="left:0;top:438px;width:214px;height:37px;background:#1e2231"></div>
 <div class="a" style="left:195px;top:417px;width:19px;height:17px;border-radius:3px;background:#2c3142"></div>
 <div class="ctl" style="left:8px;top:452px"></div><div class="ctl" style="left:41px;top:452px"></div><div class="ctl" style="left:74px;top:452px"></div>
 <div class="a" style="left:106px;top:452px;width:43px;height:23px;border-radius:4px;background:#e8543b"></div>
 <svg class="a" style="left:119px;top:459px" width="17" height="9" viewBox="0 0 17 9"><path d="M1 7Q8.5-1 16 7" stroke="#fff" stroke-width="3" fill="none"/></svg>
 <div class="ctl" style="left:174px;top:452px"></div><div class="ctl" style="left:206px;top:452px"></div>
 <svg class="a" style="left:12px;top:456px" width="13" height="13" viewBox="0 0 13 13" stroke="#cfd3dc" fill="none" stroke-width="1"><rect x="1" y="3" width="8" height="7" rx="1"/><path d="M9 5l3-2v7l-3-2M1 12L12 1"/></svg>
 <svg class="a" style="left:45px;top:456px" width="13" height="13" viewBox="0 0 13 13" stroke="#cfd3dc" fill="none" stroke-width="1"><rect x="1.5" y="1.5" width="10" height="8" rx="1"/><path d="M6.5 9.5v2M4 12h5M5 7l3-3M6 4h2v2"/></svg>
 <div class="a" style="left:74px;top:456px;width:20px;text-align:center;color:#ccc;font-size:8px">···</div>
 <svg class="a" style="left:178px;top:456px" width="13" height="13" viewBox="0 0 13 13" stroke="#cfd3dc" fill="none" stroke-width="1"><circle cx="6.5" cy="6.5" r="5.5"/><path d="M6.5 5.5v4M6.5 3.5v.8"/></svg>
</div>

</div></body></html>
